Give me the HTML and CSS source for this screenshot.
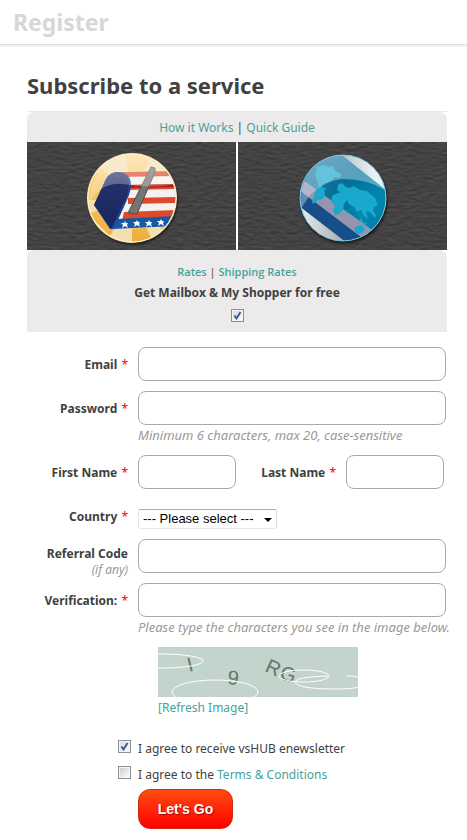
FILE: index.html
```html
<!DOCTYPE html>
<html lang="en">
<head>
<meta charset="utf-8">
<meta name="viewport" content="width=device-width, initial-scale=1">
<title>Register</title>
<link rel="stylesheet" href="styles.css">
</head>
<body>
<header class="top"><h1>Register</h1></header>
<main class="page">
  <h2>Subscribe to a service</h2>
  <section class="service">
    <p class="guide"><a href="#">How it Works</a> | <a href="#">Quick Guide</a></p>
    <div class="tiles">
      <div class="tile">
        <svg class="grain" aria-hidden="true"><filter id="leather" x="0" y="0" width="100%" height="100%" color-interpolation-filters="sRGB"><feTurbulence type="fractalNoise" baseFrequency="0.12 0.35" numOctaves="2" seed="4" result="n"/><feDiffuseLighting in="n" surfaceScale="0.4" diffuseConstant="0.37" lighting-color="#ffffff"><feDistantLight azimuth="270" elevation="45"/></feDiffuseLighting></filter><rect width="100%" height="100%" filter="url(#leather)"/></svg>
        <svg class="badge" viewBox="0 0 96 100" aria-hidden="true">
          <defs>
            <clipPath id="c1"><circle cx="48" cy="50" r="44"/></clipPath>
            <linearGradient id="gold" x1="0" y1="0" x2="0" y2="1"><stop offset="0" stop-color="#fcd98c"/><stop offset="1" stop-color="#eeac38"/></linearGradient>
            <linearGradient id="navy" x1="0" y1="0" x2="0" y2="1"><stop offset="0" stop-color="#28346c"/><stop offset="1" stop-color="#17255e"/></linearGradient>
            <linearGradient id="gloss" x1="0" y1="0" x2="0" y2="1"><stop offset="0" stop-color="#fff" stop-opacity=".4"/><stop offset="1" stop-color="#fff" stop-opacity=".18"/></linearGradient>
            <filter id="soft" x="-20%" y="-20%" width="140%" height="140%"><feGaussianBlur stdDeviation="1.5"/></filter>
          </defs>
          <circle cx="49" cy="52" r="44" fill="#111" filter="url(#soft)"/>
          <circle cx="48" cy="50" r="45" fill="#f3deaf"/>
          <g clip-path="url(#c1)" fill="url(#gold)">
            <path d="M48 50 41 4h28ZM48 50 18 20 4 34v18ZM48 50 4 66l22 22ZM48 50 48 96h22ZM48 50 92 74 82 86Z"/>
          </g>
          <g clip-path="url(#c1)">
            <path d="M36 23h58v56l-64 2Z" fill="#f4f1f1"/>
            <path d="M34 24l60-1v5l-60 1ZM40 37l54-1v5l-54 1ZM44 50l50-1v6l-50 1ZM40 64l54-2v9l-56 2Z" fill="#dc4a2b"/>
            <path d="M44 37l50-1v3l-50 1Z" fill="#a91e12"/>
            <path d="m34 71 60-3v10l-65 3Z" fill="#1259a6"/>
            <path d="M10 57 22 31q4-7 12-7 12 0 13 12 0 7-4 16L30 81h-4Z" fill="#1c4a9a"/>
            <path d="M10 57 22 31q4-7 12-7 11 1 11 13 0 8-4 16L27 81Z" fill="url(#navy)"/>
            <path d="m67 19 4 1v4L53 66l-9-1Z" fill="#747474" stroke="#4d4d4d"/>
            <g fill="#fff"><path id="star" d="m41 73 1 2h2l-1 2 1 3-3-2-3 2 1-3-2-2h3Z"/><use href="#star" x="12" y="-1"/><use href="#star" x="24" y="-1"/><use href="#star" x="36" y="-2"/></g>
            <path d="M4 58q11-24 35-22 27 5 53 0Q86 5 48 5 8 8 4 58Z" fill="url(#gloss)"/>
          </g>
          <circle cx="48" cy="50" r="44" fill="none" stroke="#fff0c5" stroke-width="1"/>
        </svg>
      </div>
      <div class="tile">
        <svg class="grain" aria-hidden="true"><rect width="100%" height="100%" filter="url(#leather)"/></svg>
        <svg class="badge" viewBox="0 0 96 100" aria-hidden="true">
          <defs>
            <clipPath id="c2"><circle cx="48" cy="50" r="43"/></clipPath>
            <linearGradient id="sea" x1="0" y1="0" x2="1" y2="1"><stop offset="0" stop-color="#3b80aa"/><stop offset=".45" stop-color="#046e98"/><stop offset=".7" stop-color="#0088b0"/><stop offset="1" stop-color="#046c95"/></linearGradient>
            <linearGradient id="silver" x1="0" y1="0" x2="1" y2="0"><stop offset="0" stop-color="#eff4f7"/><stop offset=".5" stop-color="#aaadb0"/><stop offset=".8" stop-color="#f2f2f2"/><stop offset="1" stop-color="#fff"/></linearGradient>
          </defs>
          <circle cx="49" cy="52" r="43" fill="#111" filter="url(#soft)"/>
          <g clip-path="url(#c2)">
            <path d="M0 0h96v100H0Z" fill="url(#silver)"/>
            <path d="M0 0h38l58 46v54H62L0 54Z" fill="url(#sea)"/>
            <path d="M0 26 80 84l-8 14L0 41Z" fill="#9596ad"/>
            <path d="M0 39 70 92l-14 6L0 55Z" fill="#174e8a"/>
            <g fill="#18a9cd">
              <path d="m20 28 2-9 7-2 4 2 5-1 2 5 6 3-1 4-5-1-3 3-5 3-4 1-1 3 5 2-3 1-6-5-1-5Z"/>
              <path d="m24 37 5 4 1 5-2 5-5 1-5 4-1-3 3-8Z"/>
              <path d="m40 46 6-2 5 4 1 4-3 4-1 6-4 4-4 1-2-4 2-5-4-4 1-6Z"/>
              <path d="m42 42 1-5 4-2 4 4 4 1 4-2 6 4 7 1 8 7 3 7-4 2-1 4 3 4-1 3-5-6-4-1 2 8-4-3-3-6-4 2-3-5-5-3-3-6-3-4Z"/>
              <path d="m59 81 3-3 5-1 3 5-3 3-5 1ZM66 69l2 5 5 2-4 1-4-4ZM51 64l2-3-1 6Z"/>
            </g>
            <path d="M4 66q12-30 42-35 25-1 46 12Q88 6 48 6 5 8 4 66Z" fill="#d4eaf5" opacity=".4"/>
          </g>
          <circle cx="48" cy="50" r="43" fill="none" stroke="#81c6df" stroke-width="1"/>
        </svg>
      </div>
    </div>
    <div class="offer">
      <p class="rates"><a href="#">Rates</a> <span>|</span> <a href="#">Shipping Rates</a></p>
      <label for="free">Get Mailbox &amp; My Shopper for free</label>
      <input class="check" type="checkbox" id="free" checked>
    </div>
  </section>

  <form class="form">
    <div class="row">
      <label for="email">Email <em>*</em></label>
      <input class="text" id="email" type="text">
    </div>
    <div class="row">
      <label for="pass">Password <em>*</em></label>
      <div class="field"><input class="text" id="pass" type="password"><p class="hint">Minimum 6 characters, max 20, case-sensitive</p></div>
    </div>
    <div class="row">
      <label for="first">First Name <em>*</em></label>
      <div class="names">
        <input class="text" id="first" type="text">
        <label for="last">Last Name <em>*</em></label>
        <input class="text" id="last" type="text">
      </div>
    </div>
    <div class="row country">
      <label for="country">Country <em>*</em></label>
      <div class="select"><select id="country"><option>--- Please select ---</option></select></div>
    </div>
    <div class="row">
      <label class="referral" for="ref">Referral Code<small>(if any)</small></label>
      <input class="text" id="ref" type="text">
    </div>
    <div class="row">
      <label for="verify">Verification: <em>*</em></label>
      <div class="field"><input class="text" id="verify" type="text"><p class="hint">Please type the characters you see in the image below.</p></div>
    </div>
    <div class="captcha">
      <svg viewBox="0 0 200 50" role="img" aria-label="Verification image">
        <rect width="200" height="50" fill="#c2d4cb"/>
        <g class="glyphs"><text transform="translate(31 25) rotate(-14)">I</text><text transform="translate(69 37) rotate(6)">9</text><text transform="translate(106 24) rotate(24)">R</text><text transform="translate(121 32) rotate(14)">G</text></g>
        <g fill="none" stroke="#fff"><ellipse cx="4" cy="14" rx="41" ry="7"/><ellipse cx="57" cy="45" rx="43" ry="12"/><ellipse cx="146" cy="29" rx="25" ry="6"/><path d="M170 29q-32 1-33 6 2 7 41 7 18 0 22-2M188 29q9 0 12 1"/></g>
      </svg>
      <a href="#">[Refresh Image]</a>
    </div>
    <div class="agree">
      <div class="tick"><input class="check" type="checkbox" id="news" checked><label for="news">I agree to receive vsHUB enewsletter</label></div>
      <div class="tick"><input class="check" type="checkbox" id="terms"><label for="terms">I agree to the <a href="#">Terms &amp; Conditions</a></label></div>
      <button class="go" type="button">Let's Go</button>
    </div>
  </form>
</main>
</body>
</html>
```
FILE: styles.css
```css
* { box-sizing: border-box; }
body { margin: 0; background: #fff; color: #414141; font: 12px/16px "Noto Sans", "Open Sans", sans-serif; }
h1, h2, p { margin: 0; }
a { color: #45a39c; text-decoration: none; }
.top { height: 47px; padding: 6px 13px 0; border-bottom: 2px solid #f1f1ee; box-shadow: inset 0 -1px #dcdcdc; }
h1 { color: #d7d7d7; font-size: 23px; line-height: 32px; }
.page { padding: 22px 20px 8px 27px; }
h2 { font-size: 22px; line-height: 32px; }
.service { margin-top: 10px; border-top: 1px solid #e8e8e8; text-align: center; }
.guide { height: 30px; padding-top: 8px; }
.guide, .offer { background: #eceaeb; border-radius: 8px 8px 0 0; }
.tiles { display: grid; grid-template-columns: 1fr 1fr; gap: 2px; }
.tile { position: relative; height: 108px; padding-top: 4px; display: flex; justify-content: center; align-items: center; background: #414141; }
.grain { position: absolute; inset: 0; width: 100%; height: 100%; }
.badge { position: relative; width: 96px; height: 100px; }
.offer { height: 82px; padding-top: 14px; display: flex; flex-direction: column; align-items: center; }
.rates { font-family: "Open Sans", sans-serif; font-size: 11px; font-weight: 600; }
.rates span { font-weight: normal; }
.offer label { margin-top: 5px; font-weight: bold; }
.offer .check { margin-top: 8px; }
.check { appearance: none; flex: none; width: 13px; height: 13px; margin: 0; border: 1px solid #8e8f8f; background: linear-gradient(135deg, #c5ccd3, #fff); box-shadow: inset 0 0 0 1px #f4f4f4; display: block; }
.check:checked { background: url("data:image/svg+xml,%3Csvg xmlns='http://www.w3.org/2000/svg' viewBox='0 0 11 11'%3E%3Cpath d='M2.5 5.5 4.5 8.5 8.5 2' fill='none' stroke='%2344569c' stroke-width='2'/%3E%3C/svg%3E"), linear-gradient(135deg, #d2d8de, #fff); }
.form { margin: 15px 1px 0 0; }
.row { display: grid; grid-template-columns: 101px minmax(0, 1fr); column-gap: 10px; margin-bottom: 10px; }
.row label { padding-top: 10px; text-align: right; font-weight: bold; white-space: nowrap; }
.row em { color: #f00; font-style: normal; font-weight: normal; margin-left: 1px; }
.text { width: 100%; height: 34px; min-width: 0; padding: 0 8px; border: 1px solid #a9a9a9; border-radius: 8px; background: #fff; font: inherit; display: block; }
.hint { height: 20px; padding-top: 2px; color: #999; font-size: 13px; font-style: italic; white-space: nowrap; }
.names { display: grid; grid-template-columns: 98px 1fr 98px; column-gap: 10px; padding-right: 2px; }
.country { margin-top: 20px; }
.row.country label { padding-top: 0; }
.select { position: relative; justify-self: start; }
select { appearance: none; display: block; width: 139px; height: 20px; padding: 0 4px; border: 1px solid; border-color: #abadb3 #dbdfe6 #e3e9ef #e2e3ea; border-radius: 2px; background: #fff; color: #000; font: 13px/18px "Liberation Sans", Arial, sans-serif; }
.select::after { content: ""; position: absolute; right: 5px; top: 9px; border: 4px solid transparent; border-top-color: #000; border-bottom: 0; pointer-events: none; }
.row .referral { height: 34px; padding-top: 7px; }
small { display: block; color: #999; font-size: 12px; font-style: italic; font-weight: normal; line-height: 16px; }
.captcha { padding-left: 131px; }
.captcha svg { display: block; width: 200px; height: 50px; margin-bottom: 3px; }
.glyphs { font: 20px "Liberation Sans", Arial, sans-serif; fill: #62776c; }
.agree { padding-left: 91px; margin-top: 24px; }
.tick { display: flex; gap: 7px; height: 26px; }
.tick label { padding-top: 1px; white-space: nowrap; }
.go { display: block; margin: -3px 0 0 20px; width: 95px; height: 40px; border: 1px solid #d22a08; border-radius: 12px; background: linear-gradient(#ff4c12, #f00); color: #fff; font: bold 14px/18px "Liberation Sans", Arial, sans-serif; text-shadow: 1px 1px 1px #a00; }
```
